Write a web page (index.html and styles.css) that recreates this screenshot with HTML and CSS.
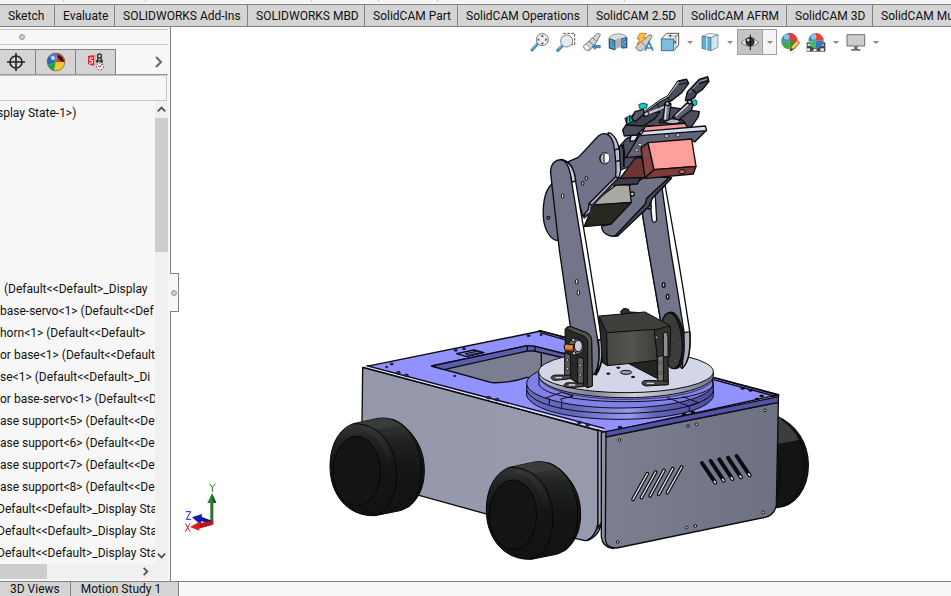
FILE: index.html
```html
<!DOCTYPE html>
<html lang="en">
<head>
    <meta charset="UTF-8">
    <meta name="viewport" content="width=device-width, initial-scale=1.0">
    <title>SOLIDWORKS Assembly</title>
    <link rel="stylesheet" href="styles.css">
</head>
<body>
    <div class="ribbon">
        <i></i><i></i><i></i><i></i><i></i><i></i>
    </div>
    <nav class="tabs">
        <button>Sketch</button>
        <button>Evaluate</button>
        <button>SOLIDWORKS Add-Ins</button>
        <button>SOLIDWORKS MBD</button>
        <button>SolidCAM Part</button>
        <button>SolidCAM Operations</button>
        <button>SolidCAM 2.5D</button>
        <button>SolidCAM AFRM</button>
        <button>SolidCAM 3D</button>
        <button>SolidCAM Multiaxis</button>
    </nav>

    <main class="workspace">
        <aside class="panel">
            <div class="grip"><span class="dot"></span></div>
            <div class="manager-tabs">
                <button aria-label="DimXpert">
                    <svg viewBox="0 0 20 20"><g fill="none" stroke="#222" stroke-width="1.6"><circle cx="10" cy="10" r="6"/><path d="M10 1v18M1 10h18"/></g></svg>
                </button>
                <button aria-label="Display Manager">
                    <svg viewBox="0 0 20 20">
                        <path d="M10 10L3 4A9 9 0 0 1 11 1Z" fill="#3d82cf"/>
                        <path d="M10 10L11 1A9 9 0 0 1 19 10Z" fill="#e03a2e"/>
                        <path d="M10 10L3 4A9 9 0 0 0 2 13Z" fill="#2a69bd"/>
                        <path d="M10 10L2 13A9 9 0 0 0 8 19Z" fill="#25a03c"/>
                        <path d="M10 10L8 19A9 9 0 0 0 19 10Z" fill="#f0c92c"/>
                        <path d="M11 3Q17 4 18 10Q13 9 11 3Z" fill="#1c1818"/>
                        <circle cx="7" cy="6" r="2" fill="#b8dbff"/>
                        <circle cx="10" cy="10" r="8.8" fill="none" stroke="#55504c" stroke-width=".6"/>
                    </svg>
                </button>
                <button aria-label="SolidCAM Manager">
                    <svg viewBox="0 0 20 20">
                        <path d="M2 4l6-1v11l-6-2Z" fill="#e0262b"/><path d="M8 3l2-1v11l-2 1Z" fill="#f7a2a2"/>
                        <path d="M7 6H4v2.500h2.500V11H3" fill="none" stroke="#fff"/>
                        <g fill="none" stroke="#333" stroke-width="1.400"><circle cx="13.500" cy="4" r="2"/><path d="M12 6l-1 5M15 6l1 5M10 9h7"/></g>
                        <circle cx="14" cy="14.500" r="3.500" fill="#fff" stroke="#555" stroke-dasharray="2 1"/><path d="M12 14l2 1 2-3" stroke="#e0262b" fill="none"/>
                    </svg>
                </button>
                <button class="more" aria-label="More tabs">
                    <svg viewBox="0 0 12 12"><path d="M3 1l5 5-5 5" fill="none" stroke="#666" stroke-width="2"/></svg>
                </button>
            </div>
            <input class="filter" type="text" aria-label="Filter">

            <div class="tree-area">
                <ul class="tree">
                    <li class="root">splay State-1&gt;)</li>
                    <li class="indent">(Default&lt;&lt;Default&gt;_Display</li>
                    <li>base-servo&lt;1&gt; (Default&lt;&lt;Def</li>
                    <li>horn&lt;1&gt; (Default&lt;&lt;Default&gt;</li>
                    <li>or base&lt;1&gt; (Default&lt;&lt;Default</li>
                    <li>se&lt;1&gt; (Default&lt;&lt;Default&gt;_Di</li>
                    <li>or base-servo&lt;1&gt; (Default&lt;&lt;D</li>
                    <li>ase support&lt;5&gt; (Default&lt;&lt;De</li>
                    <li>ase support&lt;6&gt; (Default&lt;&lt;De</li>
                    <li>ase support&lt;7&gt; (Default&lt;&lt;De</li>
                    <li>ase support&lt;8&gt; (Default&lt;&lt;De</li>
                    <li class="clipped">Default&lt;&lt;Default&gt;_Display Sta</li>
                    <li class="clipped">Default&lt;&lt;Default&gt;_Display Sta</li>
                    <li class="clipped">Default&lt;&lt;Default&gt;_Display Sta</li>
                </ul>
                <div class="vscroll">
                    <button aria-label="Scroll up"><svg viewBox="0 0 12 12"><path d="M2 8l4-4 4 4" fill="none" stroke="#555" stroke-width="2"/></svg></button>
                    <div class="vthumb"></div>
                    <button aria-label="Scroll down"><svg viewBox="0 0 12 12"><path d="M2 4l4 4 4-4" fill="none" stroke="#555" stroke-width="2"/></svg></button>
                </div>
            </div>
            <div class="hscroll">
                <div class="hthumb"></div>
                <button aria-label="Scroll right"><svg viewBox="0 0 12 12"><path d="M4 2l4 4-4 4" fill="none" stroke="#555" stroke-width="2"/></svg></button>
            </div>
            <button class="collapse" aria-label="Collapse panel"><span class="dot"></span></button>
        </aside>

        <section class="viewport">
            <div class="view-tools">
                <button aria-label="Zoom to fit"><svg viewBox="0 0 60 60"><path d="M6 54L22 37" stroke="#4388b0" stroke-width="9" stroke-linecap="round"/><path d="M7 51L20 37" stroke="#9acbe4" stroke-width="3"/><circle cx="37" cy="23" r="18" fill="#eef1f3" stroke="#777" stroke-width="3"/><path d="M37 8l5 6H32ZM37 38l5-6H32ZM22 23l6-5v10ZM52 23l-6-5v10Z" fill="#444"/></svg></button>
                <button aria-label="Zoom to area"><svg viewBox="0 0 60 60"><path d="M22 4h34v34H40" fill="none" stroke="#555" stroke-width="3" stroke-dasharray="8 4"/><path d="M5 55L20 40" stroke="#4388b0" stroke-width="9" stroke-linecap="round"/><path d="M6 52L18 40" stroke="#9acbe4" stroke-width="3"/><circle cx="32" cy="27" r="18" fill="#e4eaee" stroke="#888" stroke-width="3"/></svg></button>
                <button aria-label="Previous view"><svg viewBox="0 0 60 60"><path d="M4 42L22 26 46 5Q52 2 55 8L44 30 24 54Q8 60 4 42Z" fill="#d4d4d4" stroke="#777" stroke-width="3"/><path d="M22 27L35 41M33 18l10 11" stroke="#777" stroke-width="3"/><ellipse cx="14" cy="46" rx="7" ry="10" transform="rotate(-42 14 46)" fill="#f7f7f7" stroke="#888" stroke-width="2"/><path d="M28 44l13-11v6h15v10H41v6Z" fill="#3c8ab5"/></svg></button>
                <button aria-label="Section view"><svg viewBox="0 0 60 60"><path d="M3 17Q12 5 31 5T57 16V48H42V24Q32 17 21 28V54L4 49Z" fill="#d8dcdf" stroke="#69727a" stroke-width="2"/><path d="M4 20l17 6v27L4 48ZM41 20l15-3v29l-15 2Z" fill="#5ea4c9" stroke="#20506b" stroke-width="3"/><path d="M6 35l12-9M6 46l14-12M43 32l12-11M43 44l12-11" stroke="#20506b" stroke-width="2"/><path d="M23 26Q30 14 40 22V45L23 51Z" fill="#aeb4b9"/></svg></button>
                <button aria-label="Dynamic annotation views"><svg viewBox="0 0 60 60"><path d="M5 45L26 25 45 9Q52 6 54 13L40 39 25 55Q10 60 5 45Z" fill="#cecece" stroke="#777" stroke-width="3"/><path d="M22 29l13 14" stroke="#777" stroke-width="3"/><path d="M18 4h19L27 17h12L9 38l9-17H9Z" fill="#ffc44c" stroke="#dc7b20" stroke-width="3"/><path d="M33 56L45 30 57 56M37 48h16" fill="none" stroke="#3a83ae" stroke-width="5"/></svg></button>
                <button aria-label="View orientation"><svg viewBox="0 0 60 60"><path d="M4 21L20 4H56V40L41 56" fill="#fff" stroke="#555" stroke-width="3"/><path d="M41 21L56 4M20 12h36M31 4v15M48 14v34" fill="none" stroke="#666" stroke-width="2"/><path d="M4 21h37v35H4Z" fill="#7fbddd" stroke="#2d7199" stroke-width="3"/><path d="M31 14l-4-5h8ZM49 30l-6-5v10Z" fill="#333"/></svg></button>
                <button class="caret" aria-label="Orientation list"></button>
                <button aria-label="Display style"><svg viewBox="0 0 60 60"><path d="M6 13L27 4 54 8 33 17Z" fill="#eef7fb" stroke="#5d7d8c" stroke-width="2"/><path d="M6 13l27 4v39L6 49Z" fill="#62afd5" stroke="#426778" stroke-width="2"/><path d="M33 17l21-9v38L33 56Z" fill="#d2e5ed" stroke="#5d7d8c" stroke-width="2"/><path d="M20 15v38" stroke="#b9e3f6" stroke-width="4"/></svg></button>
                <button class="caret" aria-label="Display style list"></button>
                <button class="pressed" aria-label="Hide or show items"><svg viewBox="0 0 60 60"><path d="M3 32Q30 4 57 32Q30 54 3 32Z" fill="#eee" stroke="#777" stroke-width="3"/><circle cx="30" cy="29" r="14" fill="#333"/><circle cx="25" cy="24" r="4" fill="#ddd"/><path d="M31 8v47" stroke="#111" stroke-width="3"/></svg></button>
                <button class="caret boxed" aria-label="Hide or show list"></button>
                <button aria-label="Edit appearance"><svg viewBox="0 0 60 60"><path d="M28 27L4 30A25 25 0 0 1 27 2Z" fill="#3c8bd0"/><path d="M28 27L27 2A25 25 0 0 1 53 27Z" fill="#e23e31"/><path d="M28 27L4 30A25 25 0 0 0 28 52Z" fill="#37aa4e"/><path d="M28 27V52A25 25 0 0 0 53 27Z" fill="#3b8e47"/><circle cx="20" cy="15" r="8" fill="#fff" opacity=".45"/><path d="M30 57l4-14L51 24l8 8-17 19Z" fill="#f7cf51" stroke="#6b5227" stroke-width="3"/><path d="M48 28l9 8 3-5-8-8Z" fill="#ea8d86"/><path d="M30 57l5-9 5 4Z" fill="#333"/></svg></button>
                <button aria-label="Apply scene"><svg viewBox="0 0 60 60"><path d="M2 31h56v28H2Z" fill="#444"/><path d="M5 35h10v7H5ZM44 35h9v7h-9ZM3 49h9v8H3ZM22 51h10v7H22ZM43 49h11v8H43Z" fill="#ddd"/><path d="M30 26L8 29A22 22 0 0 1 29 3Z" fill="#3c8bd0"/><path d="M30 26L29 3A23 23 0 0 1 53 26Z" fill="#e54335"/><path d="M30 26L8 29A23 23 0 0 0 30 50Z" fill="#42b95b"/><path d="M30 26V50A23 23 0 0 0 53 26Z" fill="#3976c2"/><circle cx="23" cy="15" r="8" fill="#fff" opacity=".45"/></svg></button>
                <button class="caret" aria-label="Scene list"></button>
                <button aria-label="View settings"><svg viewBox="0 0 60 60"><path d="M3 8h53v34H3Z" fill="#ccc" stroke="#6d6d6d" stroke-width="3"/><path d="M24 43h11v8h8v5H16v-5h8Z" fill="#6d6d6d"/></svg></button>
                <button class="caret" aria-label="View settings list"></button>
            </div>

            <svg class="model" viewBox="171 27 780 554" preserveAspectRatio="xMinYMin meet" role="img" aria-label="Robot arm on a wheeled base">
                <defs>
                    <linearGradient id="side" x1="0" x2="1"><stop offset="0" stop-color="#9498aa"/><stop offset="1" stop-color="#979bae"/></linearGradient>
                    <linearGradient id="front" x1="0" x2="1"><stop offset="0" stop-color="#7c7f90"/><stop offset="1" stop-color="#6e7182"/></linearGradient>
                    <linearGradient id="tyre" x1="0" y1="0" x2="0" y2="1"><stop offset="0" stop-color="#3a3c3b"/><stop offset=".22" stop-color="#222423"/><stop offset=".5" stop-color="#151515"/><stop offset="1" stop-color="#121212"/></linearGradient>
                    <linearGradient id="ring" x1="0" x2="1"><stop offset="0" stop-color="#6868c4"/><stop offset=".25" stop-color="#6464bb"/><stop offset=".55" stop-color="#9a9af0"/><stop offset=".7" stop-color="#6060b5"/><stop offset="1" stop-color="#4e4e9c"/></linearGradient>
                    <linearGradient id="rim" x1="0" x2="1"><stop offset="0" stop-color="#b6b9c8"/><stop offset=".3" stop-color="#83868f"/><stop offset=".55" stop-color="#cfd1da"/><stop offset="1" stop-color="#777a85"/></linearGradient>
                    <linearGradient id="motor" x1="0" x2="1"><stop offset="0" stop-color="#454541"/><stop offset=".5" stop-color="#55554f"/><stop offset="1" stop-color="#3b3b38"/></linearGradient>
                    <linearGradient id="shine" x1="0" y1="0" x2="0" y2="1"><stop offset="0" stop-color="#343635"/><stop offset=".6" stop-color="#222423"/><stop offset="1" stop-color="#161616"/></linearGradient>
                    <g id="wheel">
                        <path d="M30 440C30 370 60 325 100 311L165 297C200 288 235 300 260 325C295 360 313 400 313 450C313 520 280 560 240 572L165 587C80 590 30 520 30 440Z" fill="url(#tyre)"/>
                        <path d="M100 311L165 297C185 294 200 294 215 300Q230 305 238 316L160 330Q130 305 100 311Z" fill="#3a3c3b" stroke="none"/>
                        <path d="M120 322C170 328 205 375 210 440" fill="none" stroke="url(#shine)" stroke-width="16"/>
                        <path d="M100 311C190 310 230 390 230 465C230 530 200 580 165 586M215 297C270 315 304 380 304 450C304 510 285 550 262 563" fill="none"/>
                        <ellipse cx="110" cy="453" rx="71" ry="104" fill="#141414"/>
                    </g>
                </defs>

                <!-- chassis -->
                <g transform="translate(580 370) scale(.33333)" stroke="#0c0c10" stroke-width="4" stroke-linejoin="round">
                    <path d="M590 138C650 165 685 220 685 285C685 360 640 412 588 413Z" fill="#141414"/>
                    <path d="M594 141C628 156 648 180 660 209L594 221Z" fill="#3c3e3d" stroke="none"/>
                    <path d="M605 148C655 180 675 230 674 290C670 350 645 395 605 409" fill="none"/>
                    <path d="M592 245Q608 320 592 378" fill="none"/>
                </g>
                <g transform="translate(320 320) scale(.33333)" stroke="#0c0c10" stroke-width="4" stroke-linejoin="round">
                    <path d="M128 142L835 328V610Q825 660 795 662L765 655 300 527 124 480Z" fill="url(#side)"/>
                    <path d="M835 328L846 332V600Q840 650 800 662Q828 650 835 605Z" fill="#777a8a"/>
                    <path d="M136 140L663 33 1373 225 855 338Z" fill="#9191ff"/>
                    <path d="M131 138L850 330" fill="none" stroke="#dadcf0" stroke-width="5"/>
                    <path d="M128 142L850 335M140 137L853 325" fill="none"/>
                    <path d="M655 31L750 55M660 38L745 62" fill="none"/>
                    <path d="M335 138L622 77 645 79 760 108V180L620 172Q570 190 515 188Z" fill="#7b7e90"/>
                    <path d="M335 138L622 77 645 79 760 108V120L642 93H622L372 149Z" fill="#5d5db0"/>
                    <path d="M622 77V93M645 79V94M664 100V160" fill="none"/>
                    <path d="M410 101L462 90 492 98 440 110Z" fill="#8b8bf0"/><path d="M436 101L470 94 486 98 446 106Z" fill="#6565b4" stroke-width="3"/>
                    <g fill="#29295a" stroke-width="2">
                        <ellipse cx="200" cy="141" rx="4" ry="2"/><ellipse cx="215" cy="132" rx="5" ry="3"/><ellipse cx="235" cy="158" rx="6" ry="4"/><ellipse cx="259" cy="166" rx="6" ry="4"/>
                        <ellipse cx="407" cy="91" rx="5" ry="3"/><ellipse cx="432" cy="86" rx="5" ry="3"/><ellipse cx="626" cy="47" rx="5" ry="3"/><ellipse cx="663" cy="45" rx="4" ry="2"/>
                        <ellipse cx="506" cy="233" rx="6" ry="4"/><ellipse cx="531" cy="239" rx="6" ry="4"/><ellipse cx="778" cy="308" rx="6" ry="4"/><ellipse cx="803" cy="315" rx="6" ry="4"/>
                        <ellipse cx="404" cy="168" rx="4" ry="2"/><ellipse cx="725" cy="54" rx="4" ry="3"/>
                    </g>
                </g>
                <g transform="translate(580 370) scale(.33333)" stroke="#0c0c10" stroke-width="4" stroke-linejoin="round">
                    <path d="M54 180L66 184V455L54 475Z" fill="#a6a9b6"/>
                    <path d="M64 188L80 184V512L100 536Q67 532 64 500Z" fill="#8e91a0"/>
                    <path d="M78 200L595 97 589 408Q581 437 555 442L110 534Q77 536 76 503Z" fill="url(#front)"/>
                    <path d="M78 185L595 80V97L78 201Z" fill="#5252a8"/>
                    <path d="M400 22L596 74V80" fill="none"/><path d="M400 29L590 80" fill="none"/>
                    <g fill="#d8dae4" stroke-width="3">
                        <circle cx="118" cy="210" r="4"/><circle cx="324" cy="168" r="4"/><circle cx="350" cy="163" r="4"/><circle cx="555" cy="121" r="4"/>
                        <circle cx="113" cy="516" r="4"/><circle cx="320" cy="473" r="4"/><circle cx="346" cy="468" r="4"/><circle cx="550" cy="427" r="4"/>
                    </g>
                    <g fill="#29295a"><ellipse cx="120" cy="172" rx="5" ry="2"/><ellipse cx="488" cy="55" rx="5" ry="2"/><ellipse cx="512" cy="61" rx="5" ry="2"/><ellipse cx="545" cy="78" rx="5" ry="2"/><ellipse cx="531" cy="87" rx="5" ry="2"/><ellipse cx="312" cy="133" rx="5" ry="2"/><ellipse cx="338" cy="126" rx="5" ry="2"/></g>
                    <path d="M159 388L202 311M184 383L227 306M210 378L252 301M236 373L278 296M262 368L305 291" stroke-width="11" stroke-linecap="round"/>
                    <path d="M159 388L202 311M184 383L227 306M210 378L252 301M236 373L278 296M262 368L305 291" stroke="#dcdfe9" stroke-width="4" stroke-linecap="round"/>
                    <path d="M366 279L406 338M392 273L431 332M418 268L457 327M444 263L483 322M470 258L509 316" stroke-width="12" stroke-linecap="round"/>
                    <path d="M403 334l3 4M428 328l3 4M454 323l3 4M480 318l3 4M506 312l3 4" stroke="#dcdfe9" stroke-width="5" stroke-linecap="round"/>
                </g>
                <g transform="translate(320 320) scale(.33333)" stroke="#050505" stroke-width="3">
                    <use href="#wheel"/>
                    <use href="#wheel" x="469" y="131"/>
                </g>

                <!-- turntable -->
                <g transform="translate(520 290) scale(.33333)" stroke="#0c0c10" stroke-width="3" stroke-linejoin="round">
                    <path d="M20 285V317C35 360 150 388 300 388S565 360 580 320V285Z" fill="url(#ring)"/>
                    <path d="M20 300C35 345 150 370 300 370S565 345 580 303" fill="none"/>
                    <ellipse cx="300" cy="280" rx="280" ry="74" fill="#8080e8"/>
                    <path d="M57 245V285C75 315 180 335 318 335S560 315 578 288V250Z" fill="#8585ec"/>
                    <path d="M60 268C80 303 180 328 318 328S560 305 578 270" fill="none" stroke-width="2"/>
                    <path d="M75 325L125 307 160 318 120 328M88 325V343M125 330V356M440 322L505 348 535 338 488 320M508 348V365" fill="none"/>
                    <path d="M57 245V260C70 297 180 323 318 323S565 297 580 262V245Z" fill="url(#rim)"/>
                    <ellipse cx="318" cy="245" rx="262" ry="63" fill="#d3d6e6"/>
                    <ellipse cx="318" cy="247" rx="17" ry="6" fill="#999da8"/>
                    <g fill="#333"><ellipse cx="295" cy="233" rx="5" ry="2"/><ellipse cx="265" cy="251" rx="5" ry="2"/><ellipse cx="339" cy="261" rx="5" ry="2"/></g>
                </g>

                <!-- arm, drawn back to front -->
                <g transform="translate(530 70) scale(.33333)" stroke="#0c0c10" stroke-width="4" stroke-linejoin="round">
                    <path d="M405 345L440 540 460 660 480 790Q484 875 455 895L400 800 337 430Z" fill="#fff"/>
                    <path d="M337 430L395 345 422 540 442 660 466 810Q466 870 450 890L395 770 355 540Z" fill="#73768a"/>
                    <path d="M462 788L479 785Q484 870 457 895Z" fill="#a9acb9"/>
                    <path d="M366 372Q372 365 376 382L380 450Q374 465 366 450L362 410Z" fill="#fff"/>
                    <circle cx="358" cy="411" r="6" fill="#888b9a"/>
                    <ellipse cx="413" cy="680" rx="4" ry="7" fill="#cfd2df"/><ellipse cx="401" cy="645" rx="4" ry="7" fill="#cfd2df"/>
                    <ellipse cx="430" cy="811" rx="32" ry="85" transform="rotate(-5 430 811)" fill="#2c2c2a"/>
                    <ellipse cx="424" cy="812" rx="32" ry="84" transform="rotate(-5 424 812)" fill="#3c3c3a"/>

                    <path d="M75 335C45 350 38 400 40 440S65 515 85 511L90 450Z" fill="#73768a"/>
                    <circle cx="55" cy="443" r="4" fill="#ccc"/>

                    <path d="M300 345L345 322 418 322 360 383 350 403 257 498C235 502 215 488 215 468L243 462Z" fill="#707386"/>
                    <path d="M418 322L425 324 368 384 358 408 263 498 255 498 345 403 350 385Z" fill="#44475a"/>
                    <circle cx="307" cy="372" r="6" fill="#d8dae2"/>
                    <path d="M205 385L262 343 298 345 304 397 190 407Z" fill="#a9a9a1"/>
                    <path d="M190 405L305 397 243 462 162 470Z" fill="#282820"/>
                    <path d="M258 325L335 320 322 342 248 346Z" fill="#3b3d4b"/>

                    <path d="M235 188Q262 195 270 250Q278 310 262 328L185 408 182 428 160 440Z" fill="#b9bccd"/>
                    <path d="M115 275L145 262 205 198C225 183 248 192 253 235Q260 290 257 320L178 400 174 420 158 438Z" fill="#70738a"/>
                    <path d="M253 240L269 235M257 275L273 270M257 320L265 325M174 402L188 404" fill="none"/>
                    <path d="M262 328L185 408 182 428 160 444" fill="none" stroke="#292b36" stroke-width="7"/>
                    <g stroke-width="3">
                        <ellipse cx="224" cy="265" rx="15" ry="17" fill="#b9bbc4"/><ellipse cx="230" cy="264" rx="8" ry="13" fill="#f8f8f8" stroke="none"/><path d="M216 252Q205 265 216 280M222 252v26" fill="none"/>
                        <ellipse cx="158" cy="340" rx="4" ry="6" fill="#aeb1c0"/><ellipse cx="169" cy="325" rx="4" ry="6" fill="#aeb1c0"/>
                    </g>

                    <path d="M92 268Q130 272 137 335L172 540 215 810Q224 880 198 915L150 800Z" fill="#fff"/>
                    <path d="M62 310C60 280 78 266 98 270Q120 278 125 335L158 540 203 810Q214 880 193 913Q177 917 165 895L124 790 88 540Z" fill="#73768a"/>
                    <path d="M98 270Q132 280 137 333L125 336Q119 280 98 270Z" fill="#c8cbdc"/>
                    <path d="M205 810L216 808Q221 880 198 912Q213 870 205 810Z" fill="#a9acb9"/>
                    <g fill="#d8dae5" stroke-width="3"><ellipse cx="98" cy="378" rx="4" ry="7"/><ellipse cx="140" cy="635" rx="4" ry="7"/><ellipse cx="145" cy="668" rx="4" ry="7"/></g>
                </g>

                <!-- gripper -->
                <g transform="translate(530 70) scale(.33333)" stroke="#0c0c10" stroke-width="4" stroke-linejoin="round">
                    <path d="M268 230L290 205 330 190 345 235 310 285 272 300Z" fill="#4e5060"/>
                    <path d="M273 225Q290 240 280 285M280 222l2 70" fill="none" stroke-width="5"/>
                    <path d="M302 200Q310 188 323 198L315 212 300 214Z" fill="#e4e5ec"/>
                    <path d="M315 265L335 262 348 322 270 325Z" fill="#6c3432"/>
                    <path d="M278 180L310 133 425 112 508 125 505 140 483 172 350 168 320 195 283 198Z" fill="#4b4d5c"/>
                    <path d="M290 165L315 137 390 125 375 145 340 168Z" fill="#3d3f4c"/>
                    <path d="M345 170L465 160 475 175 338 187Z" fill="#f39b96"/>
                    <path d="M330 193L528 182 494 216 483 208 355 220 335 232 340 258 288 263Z" fill="#626577"/>
                    <path d="M340 184L526 168 530 182 330 197Z" fill="#dbdeee"/>
                    <g fill="#e9eaf0" stroke-width="2"><ellipse cx="330" cy="224" rx="6" ry="4"/><ellipse cx="410" cy="198" rx="6" ry="4"/><ellipse cx="444" cy="195" rx="6" ry="4"/><ellipse cx="320" cy="240" rx="5" ry="4"/></g>
                    <path d="M333 234L354 218 372 299 345 323Z" fill="#88423f"/>
                    <path d="M354 218L485 207 498 289 372 299Z" fill="#ff9f99"/>
                    <path d="M345 323L372 299 498 289 490 312 350 325Z" fill="#7d3b39"/>
                    <ellipse cx="456" cy="305" rx="9" ry="6" fill="#c56a65" stroke-width="3"/>

                    <path d="M388 158Q388 140 420 148Q455 140 466 160Z" fill="#3d404c"/>
                    <ellipse cx="428" cy="154" rx="22" ry="7" fill="#b2b6c2" stroke-width="3"/>
                    <g fill="#12c9c5" stroke-width="2"><path d="M326 104Q338 95 352 103L350 114 330 118Z"/><path d="M284 145L302 135 308 152 290 163Z"/><ellipse cx="494" cy="98" rx="7" ry="9"/></g>
                    <path d="M290 142v18M299 138v16"/>
                    <path d="M305 145L315 125 340 118 345 130 315 155Z" fill="#585b6b"/>
                    <path d="M342 128L390 95 415 82 444 34 470 28 476 40 455 68 430 88 350 138Q335 140 342 128Z" fill="#4b4e5b"/>
                    <path d="M344 124L388 93 413 80 446 35" fill="none" stroke="#c5c8d6" stroke-width="4"/>
                    <path d="M345 134L400 112 420 98" fill="none" stroke="#c1c4d4" stroke-width="7"/>
                    <path d="M341 126L388 91 413 77 443 33 470 27M446 44L474 38M380 97l8 18M352 121l5 12M412 82l10 14" fill="none" stroke-width="3"/>
                    <path d="M466 92L472 66 508 28 533 20 537 34 516 60 500 70 494 82 478 92Z" fill="#434653"/>
                    <path d="M476 69L510 34 530 28" fill="none" stroke="#aeb1c0" stroke-width="3"/>
                    <path d="M507 40L534 33M486 57l12 12" fill="none"/>
                    <path d="M428 142L474 95 490 104 484 120 445 150Z" fill="#5a5d6d"/><path d="M437 137L476 102" stroke="#dcdfea" stroke-width="4"/>
                    <path d="M405 100Q414 90 423 102L416 150 398 154Z" fill="#777b8b"/><path d="M409 104L405 148" stroke="#e2e4ee" stroke-width="4"/>
                    <circle cx="412" cy="101" r="6" fill="#c9ccd8"/><circle cx="479" cy="96" r="6" fill="#c9ccd8"/>
                </g>

                <!-- base servo and brackets -->
                <g transform="translate(520 290) scale(.33333)" stroke="#0a0a0a" stroke-width="3" stroke-linejoin="round">
                    <path d="M302 64L312 55 326 58 328 66 350 67 352 78 305 78Z" fill="#30302e"/>
                    <path d="M237 78L375 66 450 107 450 119 260 129Z" fill="#3f3f3b"/>
                    <path d="M237 80L260 129 262 227 248 218Z" fill="#2b2b29"/>
                    <path d="M260 128L405 118 413 212 262 227Z" fill="url(#motor)"/>
                    <path d="M328 222L413 210V266Z" fill="#242422"/>
                    <path d="M403 120L448 108 452 118 450 200 444 205 445 283 430 285 412 260 412 205Z" fill="#333331"/>
                    <path d="M430 130Q442 118 444 145V200H430Z" fill="#8d8f8b"/>
                    <path d="M413 200L430 196V284L413 275Z" fill="#777977"/>
                    <path d="M366 277Q370 270 385 271L445 274V284L380 288Q365 287 366 277Z" fill="#454744"/>
                    <path d="M380 280h22" stroke="#ced1d8" stroke-width="4"/>
                    <g fill="#aaa" stroke-width="2"><circle cx="410" cy="142" r="4"/><circle cx="421" cy="218" r="4"/><circle cx="421" cy="248" r="4"/><circle cx="468" cy="105" r="3"/><circle cx="475" cy="160" r="3"/><circle cx="466" cy="212" r="3"/></g>
                    <path d="M135 120Q138 107 152 110L200 128Q215 136 215 152L217 288 203 293 165 275 137 255Z" fill="#292927"/>
                    <path d="M152 110L200 128Q215 136 215 152L217 288 203 293V155Q202 143 190 138L142 118" fill="#51514c"/>
                    <circle cx="168" cy="170" r="24" fill="#666973"/><ellipse cx="175" cy="168" rx="12" ry="17" fill="#c9ccd8"/><circle cx="160" cy="150" r="5" fill="#ddd"/><circle cx="162" cy="190" r="5" fill="#ddd"/>
                    <path d="M132 167L138 162 160 164V184L136 182Z" fill="#e8862d"/><path d="M136 177L160 179V184L136 182Z" fill="#7f3b0c" stroke="none"/>
                    <path d="M134 188L151 195V265L134 256Z" fill="#595b5d"/><path d="M173 200L190 206V289L173 277Z" fill="#595b5d"/>
                    <path d="M93 262Q98 254 110 255L152 256V266L108 271Q94 271 93 262ZM132 284Q137 277 150 278L190 280V290L147 293Q132 293 132 284Z" fill="#494b49"/>
                    <path d="M106 263h20M146 285h20" stroke="#dadde3" stroke-width="4"/>
                    <g fill="#ccc" stroke-width="2"><circle cx="142" cy="210" r="4"/><circle cx="142" cy="236" r="4"/><circle cx="181" cy="226" r="4"/><circle cx="181" cy="255" r="4"/></g>
                </g>

                <!-- axis triad -->
                <g transform="translate(170 470) scale(.33333)">
                    <path d="M121 95h9v60h-9Z" fill="#23742b"/><path d="M126 70L139 99H112Z" fill="#278632"/><path d="M126 70l3 29h10Z" fill="#17531d"/>
                    <path d="M128 162L88 152V138L128 153Z" fill="#16168f"/><path d="M66 142L96 132 92 164Z" fill="#1818b8"/>
                    <path d="M130 152V164L86 176V160Z" fill="#bb1717"/><path d="M60 171L88 155V182Z" fill="#d42323"/>
                    <path d="M118 41l9 11 9-11M127 52v14" fill="none" stroke="#0a8a14" stroke-width="3"/>
                    <path d="M48 125h14L49 148h14" fill="none" stroke="#1414e0" stroke-width="3"/>
                    <path d="M46 160l14 25M60 160l-14 25" fill="none" stroke="#e01414" stroke-width="3"/>
                </g>
            </svg>
        </section>
    </main>

    <footer class="doc-tabs">
        <button>3D Views</button>
        <button>Motion Study 1</button>
    </footer>
</body>
</html>
```
FILE: styles.css
```css
:root {
    --panel: #f7f7f7;
    --tab: #d4d4d4;
    --line: #828282;
    --line-light: #c3c3c3;
    --track: #f0f0f0;
    --thumb: #cdcdcd;
}

* {
    box-sizing: border-box;
    margin: 0;
    padding: 0;
}

body {
    display: flex;
    flex-direction: column;
    height: 100vh;
    overflow: hidden;
    font-family: Roboto, "Noto Sans", sans-serif;
    font-size: 12px;
    color: #111;
    background: #fff;
}

button {
    border: none;
    background: none;
    font: inherit;
    color: inherit;
}

svg {
    display: block;
}

.ribbon {
    display: grid;
    grid-template-columns: 64px 82px 166px 67px 59px 187px;
    flex: none;
    height: 4px;
    background: #f5f5f5;
}

.ribbon i {
    height: 2px;
    border-right: 1px solid var(--line-light);
}

.tabs {
    display: grid;
    grid-template-columns: 55px 60px 133px 117px 93px 130px 95px 104px 86px 1fr;
    flex: none;
    height: 23px;
    background: var(--tab);
    border-top: 1px solid var(--line);
    border-bottom: 1px solid var(--line);
}

.tabs button {
    padding-left: 8px;
    overflow: hidden;
    white-space: nowrap;
    text-align: left;
    border-right: 1px solid var(--line);
}

.tabs button:last-child {
    border-right: none;
}

.workspace {
    display: flex;
    flex: 1;
    min-height: 0;
}

.panel {
    position: relative;
    display: flex;
    flex-direction: column;
    flex: none;
    width: 171px;
    padding: 2px 2px 2px 0;
    background: var(--panel);
    border-right: 1px solid var(--line);
}

.grip {
    display: flex;
    align-items: center;
    height: 16px;
    padding-left: 19px;
    border-top: 1px solid var(--line-light);
    border-bottom: 1px solid var(--line-light);
}

.dot {
    width: 6px;
    height: 6px;
    background: #ccc;
    border: 1px solid #999;
    border-radius: 50%;
}

.manager-tabs {
    display: flex;
    height: 30px;
    padding-top: 4px;
    border-bottom: 1px solid #999;
}

.manager-tabs button {
    display: flex;
    align-items: center;
    justify-content: center;
    width: 40px;
    background: var(--tab);
    border-top: 1px solid var(--line);
    border-right: 1px solid var(--line);
}

.manager-tabs button:first-child {
    width: 36px;
    padding-right: 4px;
}

.manager-tabs svg {
    width: 20px;
    height: 20px;
}

.manager-tabs .more {
    width: 18px;
    margin-left: auto;
    background: none;
    border: none;
}

.manager-tabs .more svg {
    width: 12px;
    height: 12px;
}

.filter {
    height: 26px;
    width: 167px;
    background: var(--panel);
    border: 1px solid var(--line-light);
    border-left: none;
}

.tree-area {
    display: flex;
    flex: 1;
    min-height: 0;
}

.tree {
    flex: 1;
    padding-top: 1px;
    overflow: hidden;
    list-style: none;
    line-height: 22px;
    white-space: nowrap;
}

.tree .root {
    margin-bottom: 154px;
}

.tree .root,
.tree .clipped {
    text-indent: -3px;
}

.tree .indent {
    padding-left: 4px;
}

.vscroll {
    display: flex;
    flex-direction: column;
    width: 13px;
    background: var(--track);
}

.vscroll button {
    height: 17px;
}

.vscroll svg,
.hscroll svg {
    width: 11px;
    height: 11px;
    margin: auto;
}

.vthumb {
    height: 134px;
    margin-bottom: auto;
    background: var(--thumb);
}

.hscroll {
    display: flex;
    justify-content: space-between;
    height: 15px;
    padding-right: 14px;
    background: var(--track);
}

.hthumb {
    width: 47px;
    background: var(--thumb);
}

.hscroll button {
    width: 17px;
}

/* handle sticks out over the viewport edge */
.collapse {
    position: absolute;
    z-index: 1;
    top: 246px;
    right: -9px;
    display: flex;
    align-items: center;
    justify-content: center;
    width: 9px;
    height: 39px;
    background: var(--panel);
    border: 1px solid var(--line);
    border-left: none;
}

.viewport {
    position: relative;
    flex: 1;
    min-width: 0;
}

.model {
    width: 100%;
    height: 100%;
}

.view-tools {
    position: absolute;
    top: 2px;
    right: 68px;
    display: flex;
    height: 26px;
}

.view-tools button {
    display: flex;
    align-items: center;
    justify-content: center;
    width: 26px;
}

.view-tools svg {
    width: 20px;
    height: 20px;
}

.view-tools .caret {
    width: 14px;
}

.caret::before {
    content: "";
    border: 3px solid transparent;
    border-top-color: #888;
    border-bottom: none;
}

.view-tools .pressed {
    background: #c4c4c4;
    border: 1px solid #a0a0a0;
}

.view-tools .boxed {
    background: #f4f4f4;
    border: 1px solid #a0a0a0;
    border-left: none;
}

.doc-tabs {
    display: flex;
    flex: none;
    height: 15px;
    line-height: 12px;
    background: var(--panel);
    border-top: 1px solid var(--line);
}

.doc-tabs button {
    padding: 0 10px;
    background: var(--tab);
    border-right: 1px solid var(--line);
}

.doc-tabs button:last-child {
    padding-right: 17px;
}
```
